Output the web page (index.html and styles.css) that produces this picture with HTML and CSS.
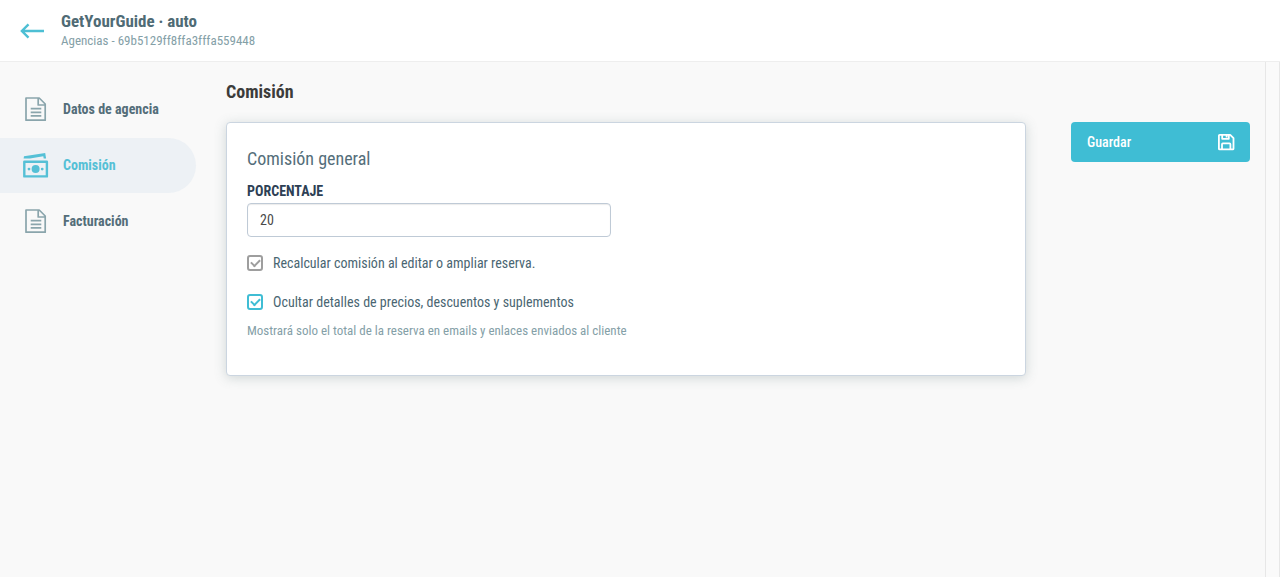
FILE: index.html
```html
<!DOCTYPE html>
<html lang="es">
<head>
  <meta charset="UTF-8">
  <meta name="viewport" content="width=device-width, initial-scale=1.0">
  <title>GetYourGuide · auto</title>
  <link rel="stylesheet" href="styles.css">
</head>
<body>
  <header class="topbar">
    <a href="#" class="back" aria-label="Volver">
      <svg width="24" height="16" viewBox="0 0 24 16" fill="none" stroke="currentColor" stroke-width="2.4">
        <path d="M24 8H2M8.5 1.4L1.9 8l6.6 6.6"/>
      </svg>
    </a>
    <div class="topbar-text">
      <h1>GetYourGuide · auto</h1>
      <p>Agencias - 69b5129ff8ffa3fffa559448</p>
    </div>
  </header>

  <div class="layout">
    <nav class="sidebar">
      <a href="#" class="nav-item">
        <svg class="nav-icon" viewBox="0 0 26 26" fill="none" stroke="currentColor" stroke-width="1.7" stroke-linejoin="round">
          <path d="M3 2h13.2l6 6v16.2H3zM15.200 2v7h7M7.700 12.700h10.600M7.700 16.300h10.600M7.700 19.900h10.600"/>
        </svg>
        <span>Datos de agencia</span>
      </a>
      <a href="#" class="nav-item active">
        <svg class="nav-icon" viewBox="0 0 26 26" fill="none" stroke="currentColor">
          <rect x="1.300" y="9.800" width="22.600" height="14.600" stroke-width="2.400" stroke-linejoin="round"/>
          <circle cx="12.600" cy="17.100" r="4" fill="currentColor" stroke="none"/>
          <circle cx="6" cy="17.100" r="1.400" fill="currentColor" stroke="none"/>
          <circle cx="19.200" cy="17.100" r="1.400" fill="currentColor" stroke="none"/>
          <path d="M1 4.200L22.200 1l.9 5.400h-2.400l-.4-2.200L7 6.400H.6z" fill="currentColor" stroke="none"/>
        </svg>
        <span>Comisión</span>
      </a>
      <a href="#" class="nav-item">
        <svg class="nav-icon" viewBox="0 0 26 26" fill="none" stroke="currentColor" stroke-width="1.7" stroke-linejoin="round">
          <path d="M3 2h13.2l6 6v16.2H3zM15.200 2v7h7M7.700 12.700h10.600M7.700 16.300h10.600M7.700 19.900h10.600"/>
        </svg>
        <span>Facturación</span>
      </a>
    </nav>

    <main class="content">
      <h2>Comisión</h2>
      <div class="columns">
        <form class="card" id="commissionForm">
          <h3>Comisión general</h3>
          <label class="field-label" for="percentage">PORCENTAJE</label>
          <input class="field" type="text" id="percentage" value="20">
          <div class="check">
            <input type="checkbox" id="recalculate" checked disabled>
            <label for="recalculate">Recalcular comisión al editar o ampliar reserva.</label>
          </div>
          <div class="check">
            <input type="checkbox" id="hideDetails" checked>
            <label for="hideDetails">Ocultar detalles de precios, descuentos y suplementos</label>
          </div>
          <p class="help">Mostrará solo el total de la reserva en emails y enlaces enviados al cliente</p>
        </form>
        <button class="save" type="submit" form="commissionForm">
          Guardar
          <svg width="18" height="18" viewBox="0 0 18 18" fill="none" stroke="currentColor" stroke-width="1.8" stroke-linejoin="round">
            <path d="M1.9 2.5q0-.7.7-.7h10.6l3.3 3.3v10.6q0 .7-.7.7H2.6q-.7 0-.7-.7zM5 16.2v-5q0-.8.8-.8h6.8q.8 0 .8.8v5M5.2 2v3.8h6.6V2M9.6 2.8v1.6"/>
          </svg>
        </button>
      </div>
    </main>
    <div class="rail"></div>
  </div>
</body>
</html>
```

FILE: styles.css
```css
* {
  box-sizing: border-box;
}

body {
  margin: 0;
  min-height: 100vh;
  display: flex;
  flex-direction: column;
  background: #f9f9f9;
  color: #546e7a;
  font-family: "Roboto Condensed", "Liberation Sans Narrow", Roboto, sans-serif;
  font-size: 14px;
  line-height: 20px;
}

h1, h2, h3, p {
  margin: 0;
}

a {
  color: inherit;
  text-decoration: none;
}

.topbar {
  display: flex;
  align-items: center;
  gap: 17px;
  height: 62px;
  padding: 0 20px;
  background: #fff;
  border-bottom: 1px solid #eee;
}

.back {
  display: flex;
  color: #4dbfd4;
}

.topbar h1 {
  font-size: 17px;
  line-height: 20px;
  color: #4f6b75;
}

.topbar p {
  font-size: 13px;
  color: #84a0a7;
}

.layout {
  flex: 1;
  display: flex;
}

.sidebar {
  flex: 0 0 196px;
  display: flex;
  flex-direction: column;
  gap: 1px;
  padding-top: 20px;
}

.nav-item {
  display: flex;
  align-items: center;
  gap: 14px;
  height: 55px;
  padding: 0 0 2px 23px;
  border-radius: 0 28px 28px 0;
  font-weight: bold;
  color: #546e7a;
}

.nav-icon {
  width: 26px;
  height: 26px;
  color: #8aa5ac;
}

.nav-item.active {
  background: #edf1f5;
}

.nav-item.active,
.nav-item.active .nav-icon {
  color: #55c0d6;
}

.content {
  flex: 1;
  padding: 20px 15px 30px 30px;
}

.content h2 {
  margin-bottom: 20px;
  font-size: 18px;
  line-height: 20px;
  color: #3c3c3b;
}

.columns {
  display: flex;
  align-items: flex-start;
  gap: 45px;
}

.card {
  flex: 1;
  padding: 20px 20px 36px;
  background: #fff;
  border: 1px solid #cbd5e0;
  border-radius: 4px;
  box-shadow: 0 2px 12px rgba(84, 110, 110, 0.25);
}

.card h3 {
  margin-bottom: 8px;
  font-size: 18px;
  font-weight: normal;
  line-height: 32px;
  color: #546e7a;
}

.field-label {
  display: block;
  margin-bottom: 4px;
  font-weight: bold;
  line-height: 16px;
  color: #2d3f55;
}

.field {
  display: block;
  width: 48%;
  height: 34px;
  margin-bottom: 16px;
  padding: 0 12px;
  border: 1px solid #bfcad6;
  border-radius: 4px;
  background: #fff;
  box-shadow: inset 0 1px 1px rgba(0, 0, 0, 0.08);
  font: inherit;
  color: #4a4a4a;
}

.check {
  display: flex;
  align-items: center;
  gap: 10px;
  margin-bottom: 19px;
  color: #4a6672;
}

.check input {
  appearance: none;
  display: grid;
  place-items: center;
  width: 16px;
  height: 16px;
  margin: 0;
  border: 2px solid #3fbdd4;
  border-radius: 3px;
  color: #3fbdd4;
}

.check input:disabled {
  border-color: #9e9e9e;
  color: #9e9e9e;
}

.check input:checked::before {
  content: "";
  width: 9px;
  height: 6px;
  margin-bottom: 2px;
  border: solid currentColor;
  border-width: 0 0 2px 2px;
  box-sizing: border-box;
  transform: rotate(-45deg);
}

.help {
  margin-top: -8px;
  font-size: 13px;
  line-height: 16px;
  color: #84a0a7;
}

.save {
  flex: 0 0 179px;
  display: flex;
  align-items: center;
  justify-content: space-between;
  height: 40px;
  padding: 0 15px 0 16px;
  border: 0;
  border-radius: 4px;
  background: #3fbdd4;
  color: #fff;
  font: inherit;
  font-weight: 500;
  cursor: pointer;
}

.rail {
  flex: 0 0 15px;
  border: solid #e7e7e7;
  border-width: 0 1px;
  background: #fafafa;
}
```
